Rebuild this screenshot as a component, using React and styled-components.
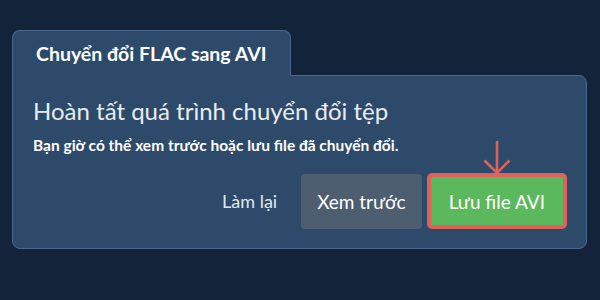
import React from 'react';
import styled, { createGlobalStyle } from 'styled-components';

const Global = createGlobalStyle`
  html, body {
    margin: 0;
    padding: 0;
    background: #12233a;
  }
  body {
    font-family: Lato, "Noto Sans", sans-serif;
  }
`;

const Page = styled.div`
  width: 600px;
  height: 300px;
  box-sizing: border-box;
  padding: 30px 13px 0 12px;
  display: flex;
  flex-direction: column;
  align-items: flex-start;
`;

const Tab = styled.div`
  position: relative;
  z-index: 1;
  height: 46px;
  box-sizing: border-box;
  padding: 0 23px;
  display: flex;
  align-items: center;
  background: #2d4a6b;
  border: 1px solid #4a6890;
  border-bottom: none;
  border-radius: 8px 8px 0 0;
  margin-bottom: -1px;
  padding-bottom: 1px;
  color: #ffffff;
  font-weight: 700;
  font-size: 19.5px;
`;

const Card = styled.div`
  align-self: stretch;
  height: 174px;
  box-sizing: border-box;
  background: #2d4a6b;
  border: 1px solid #4a6890;
  border-radius: 0 8px 8px 8px;
  padding: 20px 19px 19px 20px;
  display: flex;
  flex-direction: column;
`;

const Title = styled.h2`
  margin: 0;
  font-size: 24px;
  font-weight: 400;
  line-height: 30px;
  color: #e8ecf0;
`;

const Sub = styled.p`
  margin: 10px 0 0;
  font-size: 15.5px;
  font-weight: 700;
  line-height: 19px;
  color: #ffffff;
`;

const Actions = styled.div`
  margin-top: auto;
  display: flex;
  justify-content: flex-end;
  align-items: center;
  gap: 5px;
`;

const LinkButton = styled.button`
  background: none;
  border: none;
  padding: 0;
  margin-right: 19px;
  font-family: inherit;
  font-size: 18px;
  color: #e3e7ec;
  cursor: pointer;
`;

const Button = styled.button`
  position: relative;
  height: ${p => (p.$primary ? '56px' : '55px')};
  box-sizing: border-box;
  padding: 0 ${p => (p.$primary ? '18px' : '16px')};
  font-family: inherit;
  font-size: 19px;
  color: #ffffff;
  background: ${p => (p.$primary ? '#5cb85c' : '#4d5e70')};
  border: ${p => (p.$primary ? '4px solid #e0605a' : 'none')};
  border-radius: ${p => (p.$primary ? '5px' : '4px')};
  cursor: pointer;
`;

const Arrow = styled.svg`
  position: absolute;
  left: 50%;
  bottom: 100%;
  margin-left: -14px;
  margin-bottom: 1px;
`;

export default function App() {
  return (
    <>
      <Global />
      <Page>
        <Tab>Chuyển đổi FLAC sang AVI</Tab>
        <Card>
          <Title>Hoàn tất quá trình chuyển đổi tệp</Title>
          <Sub>Bạn giờ có thể xem trước hoặc lưu file đã chuyển đổi.</Sub>
          <Actions>
            <LinkButton>Làm lại</LinkButton>
            <Button>Xem trước</Button>
            <Button $primary>
              Lưu file AVI
              <Arrow width="28" height="36" viewBox="0 0 28 36">
                <path
                  d="M14 1 V33 M1.5 20.5 L14 33 L26.5 20.5"
                  fill="none"
                  stroke="#e0605a"
                  strokeWidth="2.6"
                />
              </Arrow>
            </Button>
          </Actions>
        </Card>
      </Page>
    </>
  );
}
